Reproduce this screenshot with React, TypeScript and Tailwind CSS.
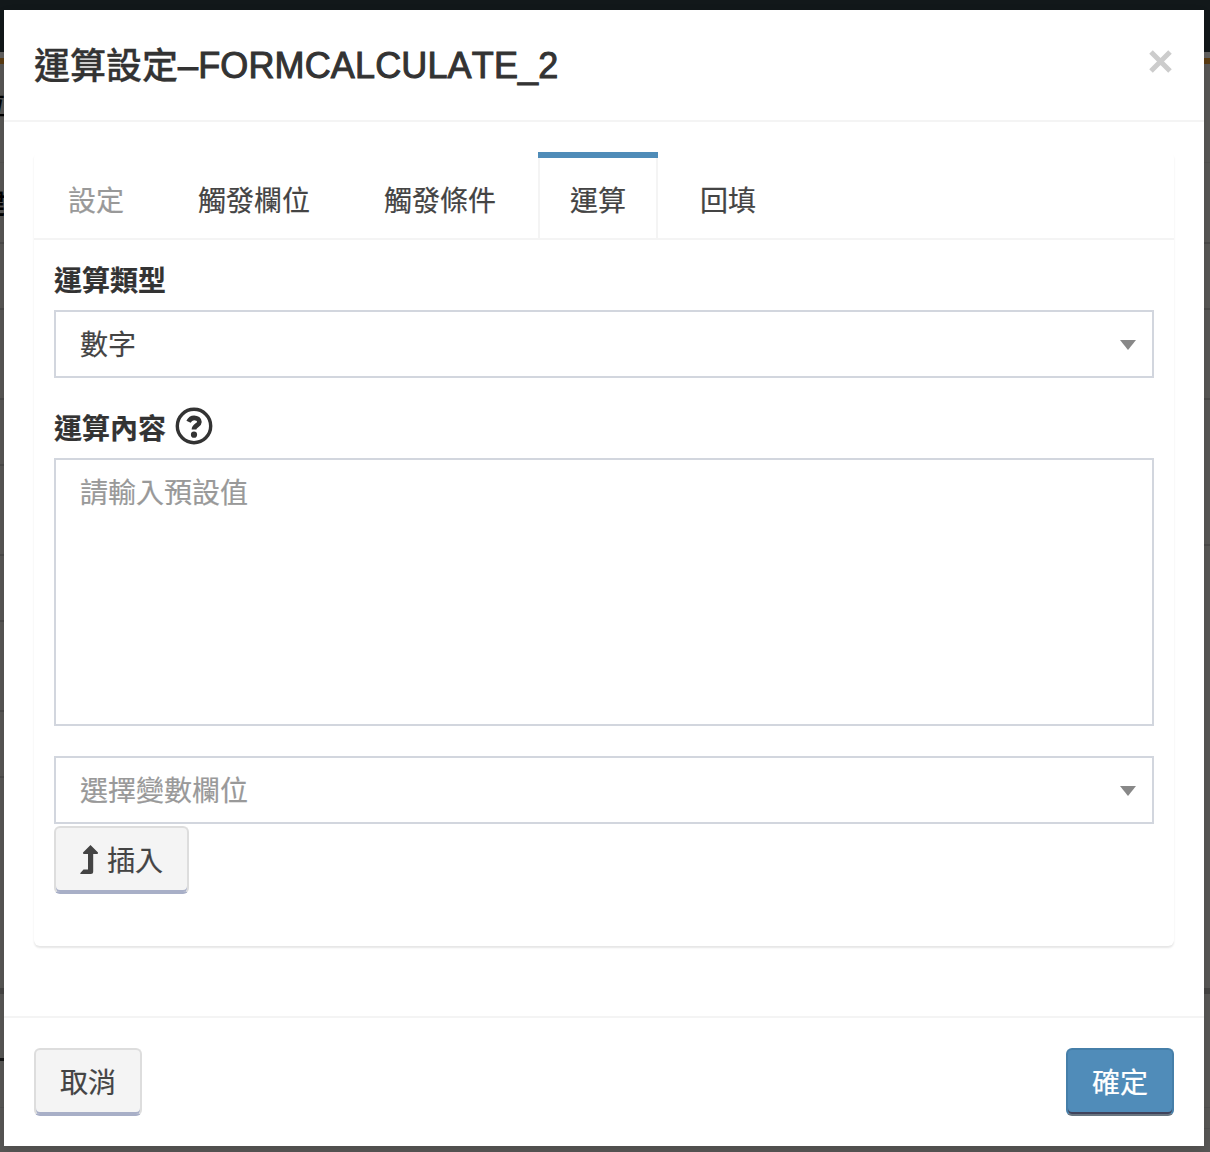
import React from "react";

const edgeRows = [
  { gap: "h-[98px]", line: "h-px bg-[#535250]" },
  { gap: "h-[79px]", line: "h-0.5 bg-[#4b4a49]" },
  { gap: "h-16", line: "h-0.5 bg-[#4b4a49]" },
  { gap: "h-[88px]", line: "h-0.5 bg-[#4b4a49]" },
];
const leftRows = [
  ...edgeRows,
  { gap: "h-16", line: "h-0.5 bg-[#4b4a49]" },
  { gap: "h-[88px]", line: "h-0.5 bg-[#4b4a49]" },
  { gap: "h-16", line: "h-0.5 bg-[#4b4a49]" },
  { gap: "h-[88px]", line: "h-0.5 bg-[#4b4a49]" },
  { gap: "h-16", line: "h-0.5 bg-[#4b4a49]" },
  { gap: "h-[210px]", line: "h-1.5 bg-[#454443]" },
  { gap: "h-16", line: "h-[3px] bg-[#151515]" },
  { gap: "h-[46px]", line: "h-px bg-[#515050]" },
];
const rightRows = [
  ...edgeRows,
  { gap: "h-36", line: "h-0.5 bg-[#4b4a49]" },
  { gap: "h-[442px]", line: "h-1.5 bg-[#454443]" },
  { gap: "h-[113px]", line: "h-px bg-[#515050]" },
  { gap: "h-5", line: "h-px bg-[#515050]" },
];

function Edge({ rows, width }: { rows: { gap: string; line: string }[]; width: string }) {
  return (
    <div className={`flex shrink-0 flex-col overflow-hidden ${width}`}>
      <div className="h-[42px] shrink-0 bg-[#12181a]" />
      <div className="h-1.5 shrink-0 bg-[#626160]" />
      <div className="h-1.5 shrink-0 bg-[#5b3c12]" />
      {rows.map((r, i) => (
        <React.Fragment key={i}>
          <div className={`shrink-0 ${r.gap}`} />
          <div className={`shrink-0 ${r.line}`} />
        </React.Fragment>
      ))}
    </div>
  );
}

function Select({ value, muted }: { value: string; muted?: boolean }) {
  return (
    <div className="flex h-[68px] items-center justify-between border-2 border-[#d2d6de] bg-white pr-4 pl-6">
      <span className={muted ? "pt-[3px] text-[#999]" : "pt-[3px] text-[#444]"}>{value}</span>
      <span className="mt-0.5 h-0 w-0 border-x-8 border-t-10 border-x-transparent border-t-[#888]" />
    </div>
  );
}

const grayButton =
  "flex h-[68px] items-center justify-center rounded-md border-2 border-[#ddd] border-b-[#a8afc7] bg-[#f4f4f4] text-[#444] shadow-[inset_0_-2px_0_#a8afc7]";

export default function App() {
  return (
    <div className="flex h-[1152px] w-[1210px] flex-col overflow-hidden bg-[#585755] font-['Liberation_Sans','Noto_Sans_CJK_TC',sans-serif] text-[28px] leading-10 text-[#333] [-webkit-text-stroke:0.2px_currentColor]">
      <div className="h-2.5 shrink-0 bg-[#12181a]" />
      <div className="flex h-[1142px]">
        <div className="relative flex">
          <Edge rows={leftRows} width="w-1" />
          <span className="absolute top-[76px] left-0 flex w-1.5 justify-end overflow-hidden text-black">位</span>
          <span className="absolute top-[175px] left-0 flex w-[5px] justify-end overflow-hidden font-bold text-black">鍵</span>
        </div>
        <div className="relative flex h-[1136px] w-[1200px] shrink-0 flex-col bg-white shadow-[0_4px_10px_rgba(0,0,0,0.12)]">
          <header className="flex h-28 shrink-0 justify-between border-b-2 border-[#f4f4f4] px-[30px] pt-[30px]">
            <h4 className="flex pt-0.5 text-[36px] leading-[50px] font-medium">
              <span className="[-webkit-text-stroke:0.3px_#333]">運算設定</span>
              <span className="-mt-px tracking-[0.14px] [-webkit-text-stroke:1px_#333] [font-kerning:none]">
                –FORMCALCULATE_2
              </span>
            </h4>
            <svg className="mt-2.5 mr-0.5 h-[23px] w-[23px]" viewBox="0 0 23 23" aria-label="×">
              <path d="M2 2 21 21M21 2 2 21" stroke="#ccc" strokeWidth="5" />
            </svg>
          </header>
          <main className="flex-1 p-[30px]">
            <section className="h-[794px] rounded-md bg-white shadow-[0_2px_2px_rgba(0,0,0,0.1)]">
              <nav className="flex h-22 border-b-2 border-[#f4f4f4] text-[#444]">
                <div className="mr-2.5 w-30 pt-[30px] pl-[34px] text-[#999]">設定</div>
                <div className="mr-2.5 w-44 pt-[30px] pl-[34px]">觸發欄位</div>
                <div className="mr-3 w-44 pt-[30px] pl-[34px]">觸發條件</div>
                <div className="flex w-30 flex-col">
                  <div className="h-1.5 bg-[#4f8cb8]" />
                  <div className="flex-1 border-x-2 border-[#f4f4f4] pt-6 text-center">運算</div>
                </div>
                <div className="pt-[30px] pl-[42px]">回填</div>
              </nav>
              <div className="px-5 pt-[22px]">
                <label className="mb-2 block font-bold">運算類型</label>
                <Select value="數字" />
                <div className="mt-[30px] mb-2.5 flex h-10 items-center">
                  <label className="pt-[3px] font-bold">運算內容</label>
                  <svg className="mb-1 ml-[9px] h-[38px] w-[38px]" viewBox="0 0 38 38" fill="none" stroke="#333">
                    <circle cx="19" cy="19" r="16.7" strokeWidth="3.4" />
                    <path d="M13.5 14.7C14.8 12.1 16.6 10.8 19.1 10.8C22 10.8 24.4 12.5 24.4 15C24.4 18.3 19 18.4 19 22.6" strokeWidth="4.7" />
                    <circle cx="19" cy="27.7" r="3.1" fill="#333" stroke="none" />
                  </svg>
                </div>
                <div className="mb-[30px] h-[268px] border-2 border-[#d2d6de] px-6 pt-3.5 text-[#999]">請輸入預設值</div>
                <Select value="選擇變數欄位" muted />
                <button className={`${grayButton} mt-0.5 w-[135px]`}>
                  <svg className="mr-2 h-[30px] w-[19px]" viewBox="0 0 19 30" fill="#444">
                    <path d="M10.5 0 18 7.5Q18.2 9 17 9H13.2V26.5Q13.2 29 10.7 29H.6Q0 29 .4 28L3.5 24.5H8V9H4Q2.8 9 3 7.5Z" />
                  </svg>
                  <span className="pt-[3px]">插入</span>
                </button>
              </div>
            </section>
          </main>
          <footer className="flex h-[130px] shrink-0 justify-between border-t-2 border-[#f4f4f4] px-[30px] pt-[30px]">
            <button className={`${grayButton} w-27`}>
              <span className="pt-[3px]">取消</span>
            </button>
            <button className="flex h-[68px] w-27 items-center justify-center rounded-md border-2 border-[#467fa9] border-b-[#687580] bg-[#508cb9] text-white shadow-[inset_0_-2px_0_#40435b]">
              <span className="pt-[3px]">確定</span>
            </button>
          </footer>
        </div>
        <Edge rows={rightRows} width="w-1.5" />
      </div>
    </div>
  );
}
